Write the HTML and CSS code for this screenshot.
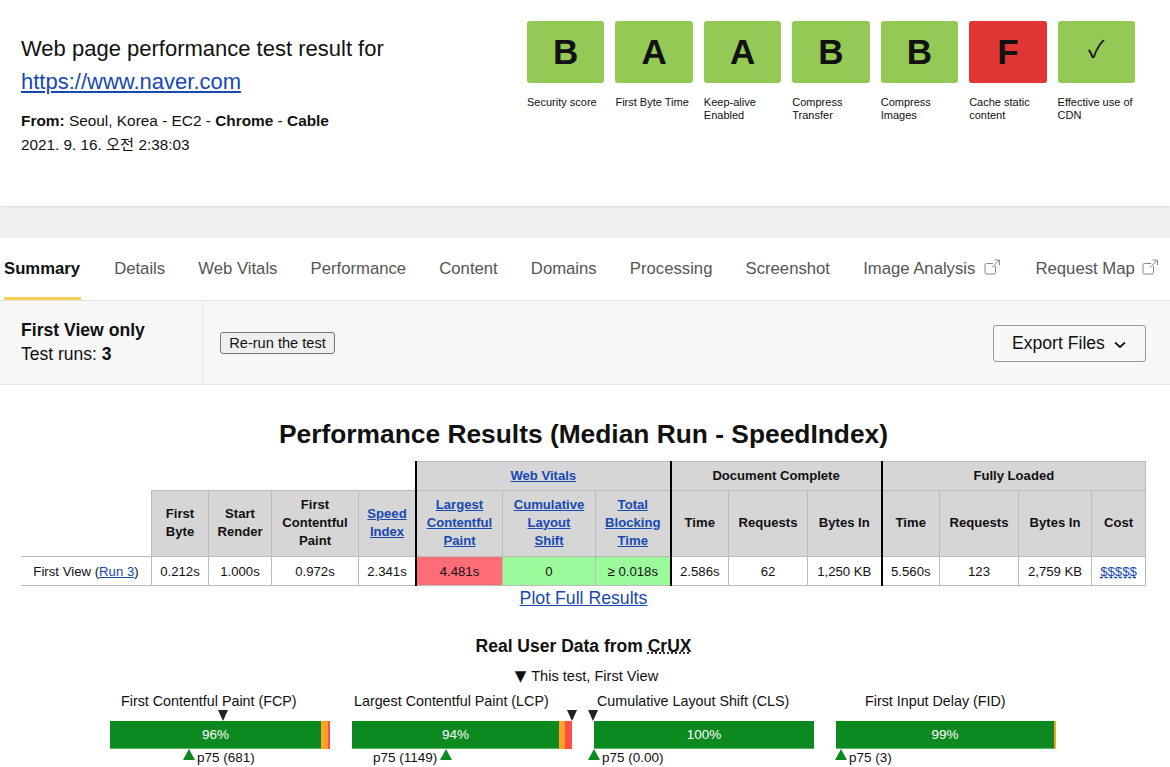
FILE: index.html
```html
<!DOCTYPE html>
<html lang="en">
<head>
<meta charset="utf-8">
<title>Web page performance test result</title>
<link rel="stylesheet" href="styles.css">
</head>
<body>
<header class="head">
  <div class="head-info">
    <h1 class="head-title">Web page performance test result for<br><a href="#">https://www.naver.com</a></h1>
    <p class="head-meta"><b>From:</b> Seoul, Korea - EC2 - <b>Chrome</b> - <b>Cable</b></p>
    <p class="head-date">2021. 9. 16. 오전 2:38:03</p>
  </div>
  <ul class="grades">
    <li class="grade"><div class="grade-box">B</div><span class="grade-label">Security score</span></li>
    <li class="grade"><div class="grade-box">A</div><span class="grade-label">First Byte Time</span></li>
    <li class="grade"><div class="grade-box">A</div><span class="grade-label">Keep-alive Enabled</span></li>
    <li class="grade"><div class="grade-box">B</div><span class="grade-label">Compress Transfer</span></li>
    <li class="grade"><div class="grade-box">B</div><span class="grade-label">Compress Images</span></li>
    <li class="grade"><div class="grade-box grade-bad">F</div><span class="grade-label">Cache static content</span></li>
    <li class="grade"><div class="grade-box grade-check">✓</div><span class="grade-label">Effective use of CDN</span></li>
  </ul>
</header>
<div class="band"></div>
<nav class="tabs">
  <a class="tab tab-active" href="#">Summary</a>
  <a class="tab" href="#">Details</a>
  <a class="tab" href="#">Web Vitals</a>
  <a class="tab" href="#">Performance</a>
  <a class="tab" href="#">Content</a>
  <a class="tab" href="#">Domains</a>
  <a class="tab" href="#">Processing</a>
  <a class="tab" href="#">Screenshot</a>
  <a class="tab tab-ext" href="#">Image Analysis<svg class="ext" viewBox="0 0 16 16" aria-hidden="true"><path d="M11.5 7v6.5a1.5 1.5 0 0 1-1.5 1.5H2.5A1.5 1.5 0 0 1 1 13.500V6a1.500 1.500 0 0 1 1.500-1.500H9M10.500 1H15.500V6M15.500 1 8 8.500"/></svg></a>
  <a class="tab" href="#">Request Map<svg class="ext" viewBox="0 0 16 16" aria-hidden="true"><path d="M11.5 7v6.5a1.5 1.5 0 0 1-1.5 1.5H2.5A1.5 1.5 0 0 1 1 13.500V6a1.500 1.500 0 0 1 1.500-1.500H9M10.500 1H15.500V6M15.500 1 8 8.500"/></svg></a>
</nav>
<section class="sub">
  <div class="sub-info">
    <div class="sub-view">First View only</div>
    <div class="sub-runs">Test runs: <b>3</b></div>
  </div>
  <div class="sub-actions">
    <button class="rerun" type="button">Re-run the test</button>
    <button class="export" type="button">Export Files<svg class="chev" viewBox="0 0 14 11" aria-hidden="true"><rect width="14" height="11" fill="#fff"/><path d="M2 3.500 7 8 12 3.500" fill="none" stroke="#111" stroke-width="1.700"/></svg></button>
  </div>
</section>
<main class="main">
  <h2 class="results-title">Performance Results (Median Run - SpeedIndex)</h2>
  <table class="results">
    <colgroup>
      <col class="c-label"><col class="c-fb"><col class="c-sr"><col class="c-fcp"><col class="c-si">
      <col class="c-lcp"><col class="c-cls"><col class="c-tbt">
      <col class="c-time"><col class="c-req"><col class="c-bytes">
      <col class="c-time2"><col class="c-req2"><col class="c-bytes2"><col class="c-cost">
    </colgroup>
    <thead>
      <tr class="row-group">
        <th class="blank-a"></th>
        <th class="blank" colspan="4"></th>
        <th class="heavy" colspan="3"><a href="#">Web Vitals</a></th>
        <th class="heavy" colspan="3">Document Complete</th>
        <th class="heavy" colspan="4">Fully Loaded</th>
      </tr>
      <tr class="row-head">
        <th class="blank-b"></th>
        <th>First Byte</th>
        <th>Start Render</th>
        <th>First Contentful Paint</th>
        <th><a href="#">Speed Index</a></th>
        <th class="heavy"><a href="#">Largest Contentful Paint</a></th>
        <th><a href="#">Cumulative<br>Layout<br>Shift</a></th>
        <th><a href="#">Total Blocking Time</a></th>
        <th class="heavy">Time</th>
        <th>Requests</th>
        <th>Bytes In</th>
        <th class="heavy">Time</th>
        <th>Requests</th>
        <th>Bytes In</th>
        <th>Cost</th>
      </tr>
    </thead>
    <tbody>
      <tr class="row-data">
        <td class="first">First View (<a href="#">Run 3</a>)</td>
        <td>0.212s</td>
        <td>1.000s</td>
        <td>0.972s</td>
        <td>2.341s</td>
        <td class="heavy poor">4.481s</td>
        <td class="good">0</td>
        <td class="good">≥ 0.018s</td>
        <td class="heavy">2.586s</td>
        <td>62</td>
        <td>1,250 KB</td>
        <td class="heavy">5.560s</td>
        <td>123</td>
        <td>2,759 KB</td>
        <td><a class="cost" href="#">$$$$$</a></td>
      </tr>
    </tbody>
  </table>
  <a class="plot" href="#">Plot Full Results</a>
  <h3 class="crux-title">Real User Data from <abbr class="crux-abbr">CrUX</abbr></h3>
  <p class="crux-legend"><span class="legend-mark">▼</span> This test, First View</p>
  <div class="metrics">
    <div class="metric">
      <div class="metric-name name-fcp">First Contentful Paint (FCP)</div>
      <div class="bar">
        <span class="tri tri-top" style="left:113px"></span>
        <span class="seg seg-good" style="width:211px">96%</span><span class="seg seg-mid" style="width:7px"></span><span class="seg seg-bad" style="width:2px"></span>
        <span class="tri tri-bot" style="left:79px"></span>
      </div>
      <div class="p75 p75-fcp">p75 (681)</div>
    </div>
    <div class="metric">
      <div class="metric-name name-lcp">Largest Contentful Paint (LCP)</div>
      <div class="bar">
        <span class="tri tri-top" style="left:220px"></span>
        <span class="seg seg-good" style="width:207px">94%</span><span class="seg seg-mid" style="width:6px"></span><span class="seg seg-bad" style="width:7px"></span>
        <span class="tri tri-bot" style="left:94px"></span>
      </div>
      <div class="p75 p75-lcp">p75 (1149)</div>
    </div>
    <div class="metric">
      <div class="metric-name name-cls">Cumulative Layout Shift (CLS)</div>
      <div class="bar">
        <span class="tri tri-top" style="left:-1px"></span>
        <span class="seg seg-good" style="width:220px">100%</span>
        <span class="tri tri-bot" style="left:0px"></span>
      </div>
      <div class="p75 p75-cls">p75 (0.00)</div>
    </div>
    <div class="metric">
      <div class="metric-name name-fid">First Input Delay (FID)</div>
      <div class="bar">
        <span class="seg seg-good" style="width:218px">99%</span><span class="seg seg-mid" style="width:2px"></span>
        <span class="tri tri-bot" style="left:5px"></span>
      </div>
      <div class="p75 p75-fid">p75 (3)</div>
    </div>
  </div>
</main>
</body>
</html>
```
FILE: styles.css
```css
* { box-sizing: border-box; }
html, body { margin: 0; padding: 0; }
body {
  background: #fff;
  color: #111;
  font-family: "Liberation Sans", "Noto Sans CJK KR", sans-serif;
  font-size: 14px;
  overflow: hidden;
  height: 767px;
}
a { color: #1749b3; }

.head {
  height: 206px;
  display: flex;
  justify-content: space-between;
  padding: 21px 35px 0 21px;
  box-shadow: 0 1px 2px rgba(0,0,0,.08);
  position: relative;
}
.head-title {
  margin: 11px 0 0;
  font-weight: 400;
  font-size: 22px;
  line-height: 33px;
}
.head-meta { margin: 11px 0 0; font-size: 15.400px; line-height: 24px; }
.head-date { margin: 0; font-size: 15.300px; line-height: 24px; }

.grades {
  list-style: none;
  margin: 0;
  padding: 0;
  width: 608px;
  display: grid;
  grid-template-columns: repeat(7, 1fr);
  column-gap: 11px;
  align-items: start;
}
.grade-box {
  height: 62px;
  border-radius: 3px;
  background: #93c954;
  font-size: 35px;
  font-weight: 700;
  display: flex;
  align-items: center;
  justify-content: center;
}
.grade-bad { background: #e03636; }
.grade-check {
  font-family: "Noto Sans CJK KR", "DejaVu Sans", sans-serif;
  font-weight: 400;
  font-size: 24px;
  line-height: 1;
  padding-bottom: 8px;
}
.grade-label {
  display: block;
  margin-top: 13px;
  font-size: 11px;
  line-height: 13px;
}

.band { height: 32px; background: #f0f0f0; }

.tabs {
  height: 63px;
  padding-left: 4px;
  display: flex;
  gap: 33.150px;
  border-bottom: 1px solid #e4e4e4;
  background: #fff;
}
.tab {
  height: 62px;
  display: flex;
  align-items: center;
  font-size: 16.700px;
  color: #555;
  text-decoration: none;
  white-space: nowrap;
}
.tab-active {
  color: #111;
  font-weight: 700;
  border-bottom: 3px solid #f7d155;
  padding-top: 3px;
  width: 77px;
}
.ext {
  width: 16px;
  height: 16px;
  margin: -4px 0 0 7px;
  fill: none;
  stroke: #888;
  stroke-width: 1;
}
.tab-ext .ext { margin-left: 9px; margin-right: 2px; }

.sub {
  height: 84px;
  display: flex;
  background: #f7f7f7;
  border-bottom: 1px solid #e4e4e4;
}
.sub-info {
  width: 203px;
  padding: 17px 0 0 21px;
  border-right: 1px solid #e4e4e4;
}
.sub-view { font-size: 17.600px; font-weight: 700; line-height: 24px; }
.sub-runs { font-size: 17.500px; line-height: 24px; }
.sub-actions {
  flex: 1;
  display: flex;
  align-items: center;
  justify-content: space-between;
  padding: 0 24px 0 17px;
}
.rerun {
  width: 115px;
  height: 22px;
  padding: 0;
  margin-top: 1px;
  background: #efefef;
  border: 1px solid #767676;
  border-radius: 3px;
  color: #111;
  font: 14.600px "Liberation Sans", sans-serif;
}
.export {
  width: 153px;
  height: 37px;
  margin-top: 1px;
  padding: 0 0 0 18px;
  display: flex;
  align-items: center;
  background: #f7f7f7;
  border: 1px solid #999;
  border-radius: 3px;
  color: #111;
  font: 17.600px "Liberation Sans", sans-serif;
}
.chev { width: 14px; height: 11px; margin: 3px 0 0 8px; }

.main {
  padding: 0 24px 0 21px;
  display: flex;
  flex-direction: column;
  align-items: stretch;
}
.results-title {
  margin: 34px 0 0;
  text-align: center;
  font-size: 26.350px;
  line-height: 30px;
  font-weight: 700;
}

.results {
  margin-top: 12px;
  width: 1125px;
  table-layout: fixed;
  border-collapse: collapse;
  font-size: 13.200px;
  color: #111;
}
.c-label { width: 130.500px; }
.c-fb { width: 57px; }
.c-sr { width: 63px; }
.c-fcp { width: 87px; }
.c-si { width: 57.500px; }
.c-lcp { width: 86.500px; }
.c-cls { width: 93px; }
.c-tbt { width: 75px; }
.c-time { width: 58px; }
.c-req { width: 79px; }
.c-bytes { width: 74px; }
.c-time2 { width: 58px; }
.c-req2 { width: 79px; }
.c-bytes2 { width: 73px; }
.c-cost { width: 54px; }

.results th, .results td {
  border: 1px solid #bbb;
  padding: 0 2px;
  text-align: center;
}
.results th {
  background: #d6d6d6;
  font-weight: 700;
  font-size: 13.100px;
  line-height: 18px;
}
.row-head th { padding-bottom: 2px; }
.row-group th { padding-bottom: 1px; }
.results th.blank-a {
  background: #fff;
  border: 0;
}
.results th.blank {
  background: #fff;
  border-top: 0;
  border-left: 0;
  border-bottom: 1px solid #bbb;
}
.results th.blank-b {
  background: #fff;
  border-left: 0;
  border-top: 0;
  border-bottom: 1px solid #bbb;
}
.results .heavy { border-left: 2px solid #000; }
.row-group { height: 29px; }
.row-head { height: 66px; }
.row-data { height: 29px; }
.results td.first { border-left: 0; white-space: nowrap; }
.results td.poor { background: #ff6e78; }
.results td.good { background: #9bfb9b; }
.cost { text-decoration-style: dashed; }

.plot {
  align-self: center;
  margin-top: 2px;
  font-size: 17.700px;
  line-height: 20px;
}
.crux-title {
  margin: 27px 0 0;
  text-align: center;
  font-size: 17.500px;
  line-height: 22px;
  font-weight: 700;
}
.crux-abbr { text-decoration: underline dotted; }
.crux-legend {
  margin: 10px 0 0;
  padding-left: 6px;
  text-align: center;
  font-size: 14.600px;
  line-height: 18px;
}
.legend-mark { font-family: "DejaVu Sans", sans-serif; font-size: 15px; line-height: 1; margin-right: 1px; }
.metrics {
  margin: 7px 0 0 89px;
  display: flex;
  gap: 22px;
}
.metric { width: 220px; }
.metric-name { font-size: 14.300px; line-height: 18px; height: 29px; white-space: nowrap; }
.name-fcp { padding-left: 11px; }
.name-lcp { padding-left: 2px; }
.name-cls { padding-left: 3px; }
.name-fid { padding-left: 29px; }
.bar {
  position: relative;
  display: flex;
  width: 220px;
  height: 28px;
}
.seg {
  display: flex;
  align-items: center;
  justify-content: center;
  height: 28px;
  font-size: 13.500px;
  color: #fff;
  border-bottom: 1px solid #5db36a;
}
.seg-good { background: #0c8a20; }
.seg-mid { background: #ffa226; border-bottom-color: #ffa226; }
.seg-bad { background: #ff4e42; border-bottom-color: #ff4e42; }
.tri { position: absolute; width: 0; height: 0; }
.tri-top {
  top: -11px;
  border-left: 5.500px solid transparent;
  border-right: 5.500px solid transparent;
  border-top: 11px solid #222;
  margin-left: -5.500px;
}
.tri-bot {
  top: 28px;
  border-left: 6px solid transparent;
  border-right: 6px solid transparent;
  border-bottom: 11px solid #0c8a20;
  margin-left: -6px;
}
.p75 { font-size: 13.500px; line-height: 18px; white-space: nowrap; }
.p75-fcp { padding-left: 87px; }
.p75-lcp { padding-left: 21px; }
.p75-cls { padding-left: 8px; }
.p75-fid { padding-left: 13px; }
```
